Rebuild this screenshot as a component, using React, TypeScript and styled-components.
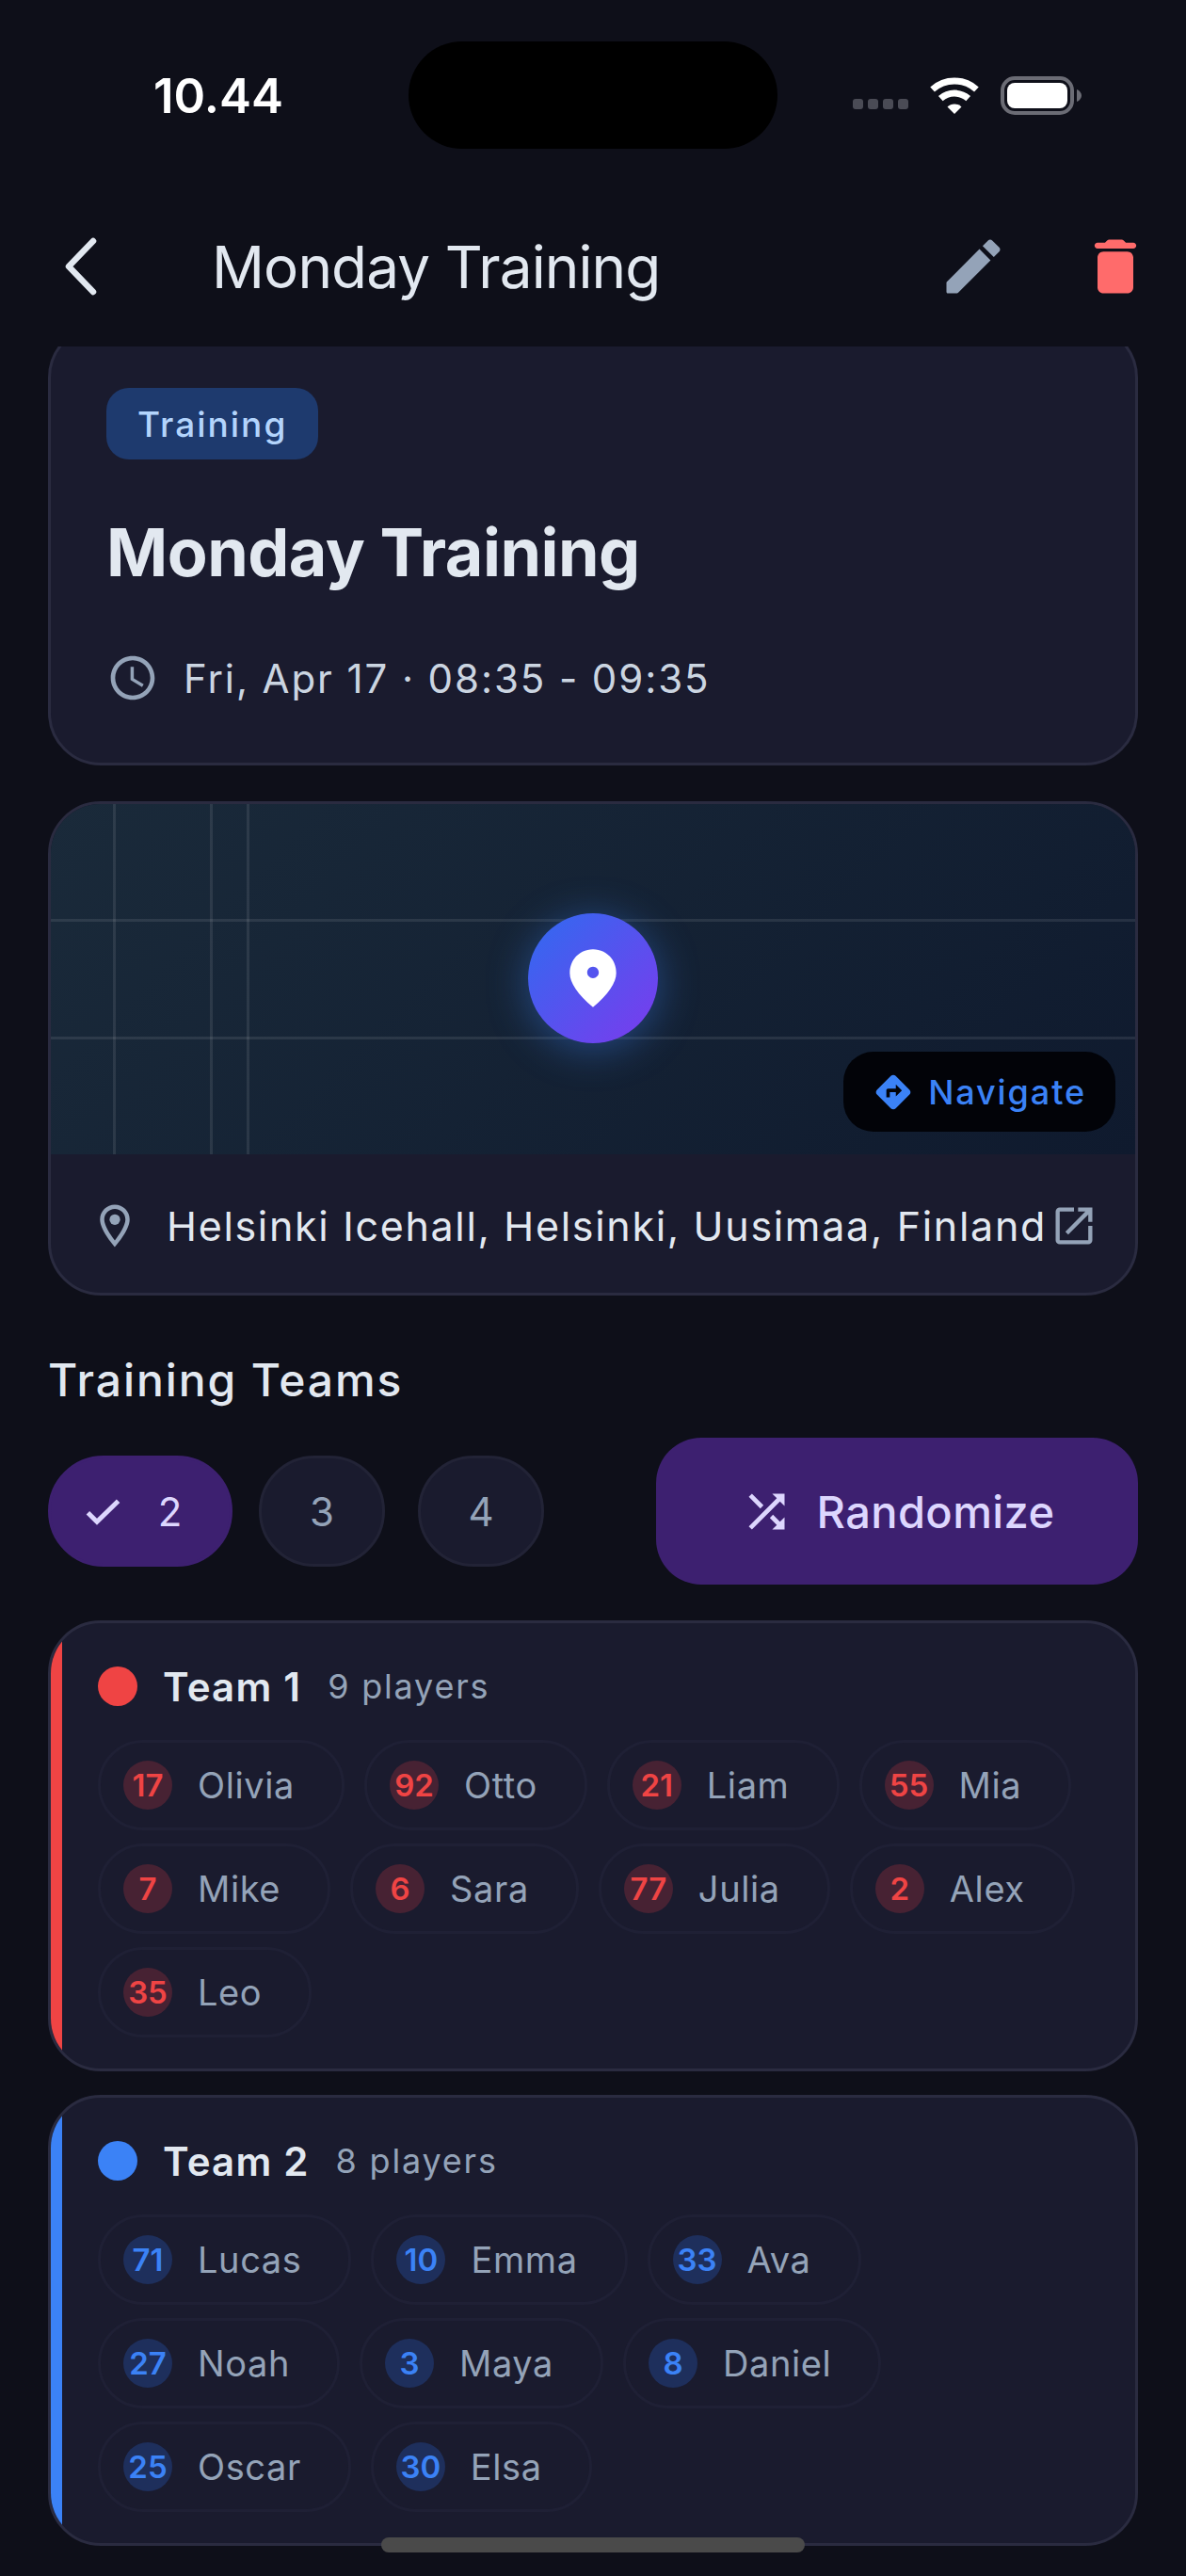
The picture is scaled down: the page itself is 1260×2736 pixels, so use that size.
import styled, { createGlobalStyle } from 'styled-components'
import {
  MdAccessTime,
  MdDirections,
  MdOpenInNew,
  MdOutlineLocationOn,
  MdShuffle,
} from 'react-icons/md'

interface IPlayer {
  number: number
  name: string
}

interface ITeam {
  name: string
  color: string
  badge: string
  players: IPlayer[]
}

const teams: ITeam[] = [
  {
    name: 'Team 1',
    color: '#ef4444',
    badge: '#472233',
    players: [
      { number: 17, name: 'Olivia' },
      { number: 92, name: 'Otto' },
      { number: 21, name: 'Liam' },
      { number: 55, name: 'Mia' },
      { number: 7, name: 'Mike' },
      { number: 6, name: 'Sara' },
      { number: 77, name: 'Julia' },
      { number: 2, name: 'Alex' },
      { number: 35, name: 'Leo' },
    ],
  },
  {
    name: 'Team 2',
    color: '#3b82f6',
    badge: '#1e2f5c',
    players: [
      { number: 71, name: 'Lucas' },
      { number: 10, name: 'Emma' },
      { number: 33, name: 'Ava' },
      { number: 27, name: 'Noah' },
      { number: 3, name: 'Maya' },
      { number: 8, name: 'Daniel' },
      { number: 25, name: 'Oscar' },
      { number: 30, name: 'Elsa' },
    ],
  },
]

const WifiIcon = () => (
  <svg width="54" height="39" viewBox="0 0 54 39" fill="none">
    <path d="M3.6 13 A35 35 0 0 1 50.4 13" stroke="#fff" strokeWidth="7" />
    <path d="M12.3 22.7 A22 22 0 0 1 41.7 22.7" stroke="#fff" strokeWidth="7" />
    <path d="M27 39 L19.5 31.5 A10.6 10.6 0 0 1 34.5 31.5 Z" fill="#fff" />
  </svg>
)

const BatteryIcon = () => (
  <svg width="86" height="41" viewBox="0 0 86 41" fill="none">
    <rect x="2" y="2" width="74" height="37" rx="13" stroke="#6b6c75" strokeWidth="4" />
    <rect x="7" y="7" width="64" height="27" rx="8" fill="#fff" />
    <path d="M81 14 C84 15 86 18 86 20.5 C86 23 84 26 81 27 Z" fill="#6b6c75" />
  </svg>
)

const BackIcon = () => (
  <svg width="36" height="62" viewBox="0 0 36 62" fill="none">
    <path
      d="M31 4 L5 31 L31 58"
      stroke="#e2e8f0"
      strokeWidth="6.5"
      strokeLinecap="round"
      strokeLinejoin="round"
    />
  </svg>
)

const EditIcon = () => (
  <svg width="76" height="76" viewBox="0 0 24 24" fill="#94a3b8">
    <path d="M3 17.46V20.5c0 .28.22.5.5.5h3.04c.13 0 .26-.05.35-.15L17.81 9.94l-3.75-3.75L3.15 17.1c-.1.1-.15.22-.15.36z" />
    <path d="M20.71 7.04c.39-.39.39-1.02 0-1.41l-2.34-2.34c-.39-.39-1.02-.39-1.41 0l-1.83 1.83 3.75 3.75 1.83-1.83z" />
  </svg>
)

const TrashIcon = () => (
  <svg width="76" height="76" viewBox="0 0 24 24" fill="#ff6b6b">
    <path d="M6 19c0 1.1.9 2 2 2h8c1.1 0 2-.9 2-2V9c0-1.1-.9-2-2-2H8c-1.1 0-2 .9-2 2v10zM18 4h-2.5l-.71-.71c-.18-.18-.44-.29-.7-.29H9.91c-.26 0-.52.11-.7.29L8.5 4H6c-.55 0-1 .45-1 1s.45 1 1 1h12c.55 0 1-.45 1-1s-.45-1-1-1z" />
  </svg>
)

const MapPinIcon = () => (
  <svg width="74" height="74" viewBox="0 0 24 24" fill="#fff">
    <path d="M12 2c-4.2 0-8 3.22-8 8.2 0 3.32 2.67 7.25 8 11.8 5.33-4.55 8-8.48 8-11.8C20 5.22 16.2 2 12 2zm0 10c-1.1 0-2-.9-2-2s.9-2 2-2 2 .9 2 2-.9 2-2 2z" />
  </svg>
)

const CheckIcon = () => (
  <svg width="48" height="48" viewBox="0 0 24 24" fill="none">
    <path d="M4.2 12.9 L9 17.6 L20.3 6.6" stroke="currentColor" strokeWidth="2.5" />
  </svg>
)

const App = () => {
  return (
    <Screen>
      <GlobalStyle />
      <StatusBar>
        <Clock>10.44</Clock>
        <Island />
        <StatusIcons>
          <SignalDots>
            {[0, 1, 2, 3].map((dot) => (
              <SignalDot key={dot} />
            ))}
          </SignalDots>
          <WifiIcon />
          <BatteryIcon />
        </StatusIcons>
      </StatusBar>

      <Header>
        <BackButton>
          <BackIcon />
        </BackButton>
        <HeaderTitle>Monday Training</HeaderTitle>
        <HeaderActions>
          <EditIcon />
          <TrashIcon />
        </HeaderActions>
      </Header>

      <Scroller>
        <Content>
          <EventCard>
            <TypeBadge>Training</TypeBadge>
            <EventTitle>Monday Training</EventTitle>
            <EventTime>
              <MdAccessTime size={56} color="#94a3b8" />
              <span>Fri, Apr 17 · 08:35 - 09:35</span>
            </EventTime>
          </EventCard>

          <LocationCard>
            <MapArea>
              <PinCircle>
                <MapPinIcon />
              </PinCircle>
              <NavigateButton>
                <MdDirections size={44} />
                Navigate
              </NavigateButton>
            </MapArea>
            <AddressRow>
              <MdOutlineLocationOn size={54} color="#94a3b8" />
              <AddressText>Helsinki Icehall, Helsinki, Uusimaa, Finland</AddressText>
              <MdOpenInNew size={52} color="#94a3b8" />
            </AddressRow>
          </LocationCard>

          <SectionTitle>Training Teams</SectionTitle>

          <TeamControls>
            <CountChips>
              <CountChip $selected>
                <CheckIcon />
                <span>2</span>
              </CountChip>
              <CountChip>3</CountChip>
              <CountChip>4</CountChip>
            </CountChips>
            <RandomizeButton>
              <MdShuffle size={57} />
              Randomize
            </RandomizeButton>
          </TeamControls>

          <TeamList>
            {teams.map((team) => (
              <TeamCard key={team.name}>
                <TeamStripe $color={team.color} />
                <TeamBody>
                  <TeamHeader>
                    <TeamDot $color={team.color} />
                    <TeamName>{team.name}</TeamName>
                    <PlayerCount>{team.players.length} players</PlayerCount>
                  </TeamHeader>
                  <PlayerChips>
                    {team.players.map((player) => (
                      <PlayerChip key={player.name}>
                        <PlayerNumber $color={team.color} $background={team.badge}>
                          {player.number}
                        </PlayerNumber>
                        <PlayerName>{player.name}</PlayerName>
                      </PlayerChip>
                    ))}
                  </PlayerChips>
                </TeamBody>
              </TeamCard>
            ))}
          </TeamList>
        </Content>
      </Scroller>

      <HomeIndicator />
    </Screen>
  )
}

export default App

const GlobalStyle = createGlobalStyle`
  html, body {
    margin: 0;
    padding: 0;
    background: #0e0f19;
  }

  * {
    box-sizing: border-box;
  }
`

const Screen = styled.div`
  position: relative;
  display: flex;
  flex-direction: column;
  width: 1260px;
  height: 2736px;
  overflow: hidden;
  background: #0e0f19;
  font-family: Inter, 'Liberation Sans', sans-serif;
`

const StatusBar = styled.div`
  display: grid;
  grid-template-columns: 1fr auto 1fr;
  align-items: center;
  height: 158px;
  padding-top: 44px;
`

const Clock = styled.div`
  padding-left: 163px;
  color: #fff;
  font-size: 51px;
  font-weight: 600;
`

const Island = styled.div`
  width: 392px;
  height: 114px;
  border-radius: 57px;
  background: #000;
`

const StatusIcons = styled.div`
  display: flex;
  align-items: center;
  justify-content: flex-end;
  gap: 22px;
  padding-right: 111px;
`

const SignalDots = styled.div`
  display: flex;
  gap: 5px;
  margin-top: 18px;
`

const SignalDot = styled.div`
  width: 11px;
  height: 11px;
  border-radius: 3px;
  background: #4a4b55;
`

const Header = styled.div`
  display: flex;
  align-items: center;
  height: 210px;
  padding: 40px 37px 0 68px;
`

const BackButton = styled.div`
  display: flex;
  width: 157px;
`

const HeaderTitle = styled.div`
  flex: 1;
  color: #e2e8f0;
  font-size: 62px;
  font-weight: 400;
  letter-spacing: -0.9px;
`

const HeaderActions = styled.div`
  display: flex;
  align-items: center;
  gap: 75px;
`

const Scroller = styled.div`
  flex: 1;
  overflow: hidden;
`

const Content = styled.div`
  margin-top: -23px;
  padding: 0 51px;
`

const Card = styled.div`
  border: 3px solid #2a2b40;
  border-radius: 56px;
  background: #1a1b2e;
  overflow: hidden;
`

const EventCard = styled(Card)`
  height: 468px;
  padding: 64px 59px 0;
`

const TypeBadge = styled.div`
  display: inline-flex;
  align-items: center;
  height: 76px;
  padding: 0 33px;
  border-radius: 24px;
  background: #1e3a6e;
  color: #b3d4fc;
  font-size: 37px;
  font-weight: 500;
  letter-spacing: 2px;
`

const EventTitle = styled.div`
  margin-top: 64px;
  color: #e2e8f0;
  font-size: 70px;
  font-weight: 700;
  line-height: 70px;
  letter-spacing: -0.5px;
`

const EventTime = styled.div`
  display: flex;
  align-items: center;
  gap: 26px;
  margin-top: 70px;
  color: #cbd5e1;
  font-size: 42px;
  letter-spacing: 1.9px;
`

const LocationCard = styled(Card)`
  margin-top: 38px;
`

const MapArea = styled.div`
  position: relative;
  display: flex;
  align-items: center;
  justify-content: center;
  height: 372px;
  background-color: #14202f;
  background-image:
    linear-gradient(rgba(255, 255, 255, 0.09), rgba(255, 255, 255, 0.09)),
    linear-gradient(rgba(255, 255, 255, 0.09), rgba(255, 255, 255, 0.09)),
    linear-gradient(rgba(255, 255, 255, 0.09), rgba(255, 255, 255, 0.09)),
    linear-gradient(rgba(255, 255, 255, 0.09), rgba(255, 255, 255, 0.09)),
    linear-gradient(rgba(255, 255, 255, 0.09), rgba(255, 255, 255, 0.09)),
    linear-gradient(135deg, #1a2a3a 0%, #0f1a2e 100%);
  background-repeat: no-repeat;
  background-size:
    100% 3px,
    100% 3px,
    3px 100%,
    3px 100%,
    3px 100%,
    100% 100%;
  background-position:
    0 122px,
    0 247px,
    66px 0,
    169px 0,
    208px 0,
    0 0;
`

const PinCircle = styled.div`
  display: flex;
  align-items: center;
  justify-content: center;
  width: 138px;
  height: 138px;
  margin-bottom: 3px;
  border-radius: 50%;
  background: linear-gradient(135deg, #2f6bf0 0%, #7c3aed 100%);
  box-shadow: 0 6px 44px rgba(59, 130, 246, 0.42);
`

const NavigateButton = styled.div`
  position: absolute;
  right: 21px;
  bottom: 24px;
  display: flex;
  align-items: center;
  gap: 15px;
  height: 85px;
  padding: 0 31px;
  border-radius: 32px;
  background: #020308;
  color: #3b82f6;
  font-size: 36px;
  font-weight: 500;
  letter-spacing: 1.9px;
`

const AddressRow = styled.div`
  display: flex;
  align-items: center;
  height: 147px;
  padding: 5px 0 0 41px;
`

const AddressText = styled.div`
  margin: 0 3px 0 28px;
  color: #e2e8f0;
  font-size: 43px;
  letter-spacing: 1.68px;
  white-space: nowrap;
`

const SectionTitle = styled.div`
  margin-top: 60px;
  color: #e2e8f0;
  font-size: 48px;
  font-weight: 500;
  line-height: 60px;
  letter-spacing: 1.9px;
`

const TeamControls = styled.div`
  display: flex;
  align-items: center;
  justify-content: space-between;
  margin-top: 31px;
`

const CountChips = styled.div`
  display: flex;
  gap: 35px;
`

const CountChip = styled.div<{ $selected?: boolean }>`
  display: flex;
  align-items: center;
  justify-content: center;
  gap: 35px;
  width: ${({ $selected }) => ($selected ? '196px' : '134px')};
  height: 118px;
  margin-right: ${({ $selected }) => ($selected ? '-7px' : '0')};
  padding-right: ${({ $selected }) => ($selected ? '20px' : '0')};
  border: 3px solid ${({ $selected }) => ($selected ? '#3d2070' : '#222336')};
  border-radius: 59px;
  background: ${({ $selected }) => ($selected ? '#3d2070' : '#1a1b2e')};
  color: ${({ $selected }) => ($selected ? '#ddd6fe' : '#94a3b8')};
  font-size: 42px;
`

const RandomizeButton = styled.div`
  display: flex;
  align-items: center;
  justify-content: center;
  gap: 25px;
  width: 512px;
  height: 156px;
  border-radius: 48px;
  background: #3d2070;
  color: #ddd6fe;
  font-size: 47px;
  font-weight: 500;
  letter-spacing: 0.4px;
`

const TeamList = styled.div`
  display: flex;
  flex-direction: column;
  gap: 25px;
  margin-top: 38px;
`

const TeamCard = styled(Card)`
  display: flex;
  height: 479px;
`

const TeamStripe = styled.div<{ $color: string }>`
  flex: none;
  width: 12px;
  background: ${({ $color }) => $color};
`

const TeamBody = styled.div`
  flex: 1;
  padding: 46px 38px 0;
`

const TeamHeader = styled.div`
  display: flex;
  align-items: center;
  height: 42px;
  margin-bottom: 36px;
`

const TeamDot = styled.div<{ $color: string }>`
  width: 42px;
  height: 42px;
  border-radius: 50%;
  background: ${({ $color }) => $color};
`

const TeamName = styled.div`
  margin-left: 27px;
  color: #e2e8f0;
  font-size: 42px;
  font-weight: 600;
  letter-spacing: 1.2px;
`

const PlayerCount = styled.div`
  margin-left: 28px;
  color: #94a3b8;
  font-size: 36px;
  letter-spacing: 1.8px;
`

const PlayerChips = styled.div`
  display: flex;
  flex-wrap: wrap;
  gap: 14px 21px;
`

const PlayerChip = styled.div`
  display: flex;
  align-items: center;
  gap: 27px;
  height: 96px;
  padding: 0 50px 0 24px;
  border: 3px solid #1f2035;
  border-radius: 48px;
`

const PlayerNumber = styled.div<{ $color: string; $background: string }>`
  display: flex;
  align-items: center;
  justify-content: center;
  width: 52px;
  height: 52px;
  border-radius: 50%;
  background: ${({ $background }) => $background};
  color: ${({ $color }) => $color};
  font-size: 33px;
  font-weight: 600;
`

const PlayerName = styled.div`
  color: #94a3b8;
  font-size: 38px;
  letter-spacing: 0.6px;
`

const HomeIndicator = styled.div`
  position: absolute;
  left: 405px;
  top: 2695px;
  width: 450px;
  height: 16px;
  border-radius: 8px;
  background: #4a4a4a;
`
